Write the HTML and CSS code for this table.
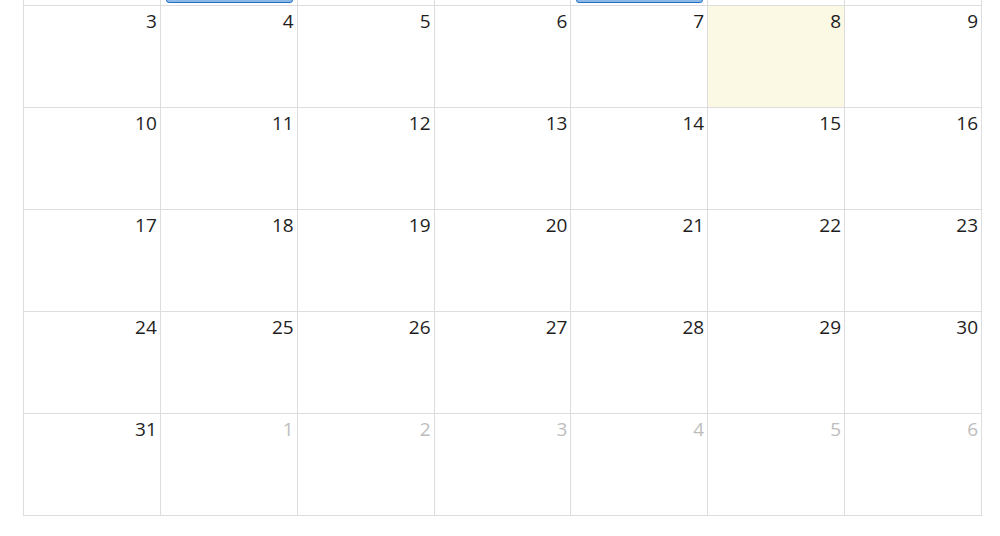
FILE: index.html
```html
<!DOCTYPE html>
<html>
<head>
<meta charset="utf-8">
<link rel="stylesheet" href="styles.css">
</head>
<body>
<div class="cal">
  <table class="grid">
    <tr>
      <td><div class="cell"></div></td>
      <td><div class="cell"><div class="event"></div></div></td>
      <td><div class="cell"></div></td>
      <td><div class="cell"></div></td>
      <td><div class="cell"><div class="event"></div></div></td>
      <td><div class="cell"></div></td>
      <td><div class="cell"></div></td>
    </tr>
    <tr>
      <td><div class="cell"><span class="num">3</span></div></td>
      <td><div class="cell"><span class="num">4</span></div></td>
      <td><div class="cell"><span class="num">5</span></div></td>
      <td><div class="cell"><span class="num">6</span></div></td>
      <td><div class="cell"><span class="num">7</span></div></td>
      <td class="today"><div class="cell"><span class="num">8</span></div></td>
      <td><div class="cell"><span class="num">9</span></div></td>
    </tr>
    <tr>
      <td><div class="cell"><span class="num">10</span></div></td>
      <td><div class="cell"><span class="num">11</span></div></td>
      <td><div class="cell"><span class="num">12</span></div></td>
      <td><div class="cell"><span class="num">13</span></div></td>
      <td><div class="cell"><span class="num">14</span></div></td>
      <td><div class="cell"><span class="num">15</span></div></td>
      <td><div class="cell"><span class="num">16</span></div></td>
    </tr>
    <tr>
      <td><div class="cell"><span class="num">17</span></div></td>
      <td><div class="cell"><span class="num">18</span></div></td>
      <td><div class="cell"><span class="num">19</span></div></td>
      <td><div class="cell"><span class="num">20</span></div></td>
      <td><div class="cell"><span class="num">21</span></div></td>
      <td><div class="cell"><span class="num">22</span></div></td>
      <td><div class="cell"><span class="num">23</span></div></td>
    </tr>
    <tr>
      <td><div class="cell"><span class="num">24</span></div></td>
      <td><div class="cell"><span class="num">25</span></div></td>
      <td><div class="cell"><span class="num">26</span></div></td>
      <td><div class="cell"><span class="num">27</span></div></td>
      <td><div class="cell"><span class="num">28</span></div></td>
      <td><div class="cell"><span class="num">29</span></div></td>
      <td><div class="cell"><span class="num">30</span></div></td>
    </tr>
    <tr>
      <td><div class="cell"><span class="num">31</span></div></td>
      <td><div class="cell"><span class="num other">1</span></div></td>
      <td><div class="cell"><span class="num other">2</span></div></td>
      <td><div class="cell"><span class="num other">3</span></div></td>
      <td><div class="cell"><span class="num other">4</span></div></td>
      <td><div class="cell"><span class="num other">5</span></div></td>
      <td><div class="cell"><span class="num other">6</span></div></td>
    </tr>
  </table>
</div>
</body>
</html>
```

FILE: styles.css
```css
html, body {
  margin: 0;
  padding: 0;
  background: #ffffff;
  overflow: hidden;
}

body {
  font-family: "Open Sans", "Liberation Sans", sans-serif;
  color: #1e1e1e;
}

.cal {
  padding-left: 23px;
  margin-top: -97px;
}

.grid {
  border-collapse: collapse;
  table-layout: fixed;
  width: 959px;
}

.grid td {
  border: 1px solid #dddddd;
  padding: 0;
  vertical-align: top;
}

.grid td.today {
  background: #fbf8e3;
}

.cell {
  height: 101px;
  display: flex;
  flex-direction: column;
  align-items: flex-end;
  padding: 2px 3px 2px 4px;
  box-sizing: border-box;
}

.num {
  font-size: 19px;
  line-height: 26px;
  color: #1e1e1e;
}

.num.other {
  color: #bdbdbd;
}

.event {
  margin-top: auto;
  align-self: stretch;
  height: 20px;
  margin-left: 1px;
  margin-right: 1px;
  border: 1px solid #1f6fc4;
  border-radius: 3px;
  background: #8db8e8;
}
```
